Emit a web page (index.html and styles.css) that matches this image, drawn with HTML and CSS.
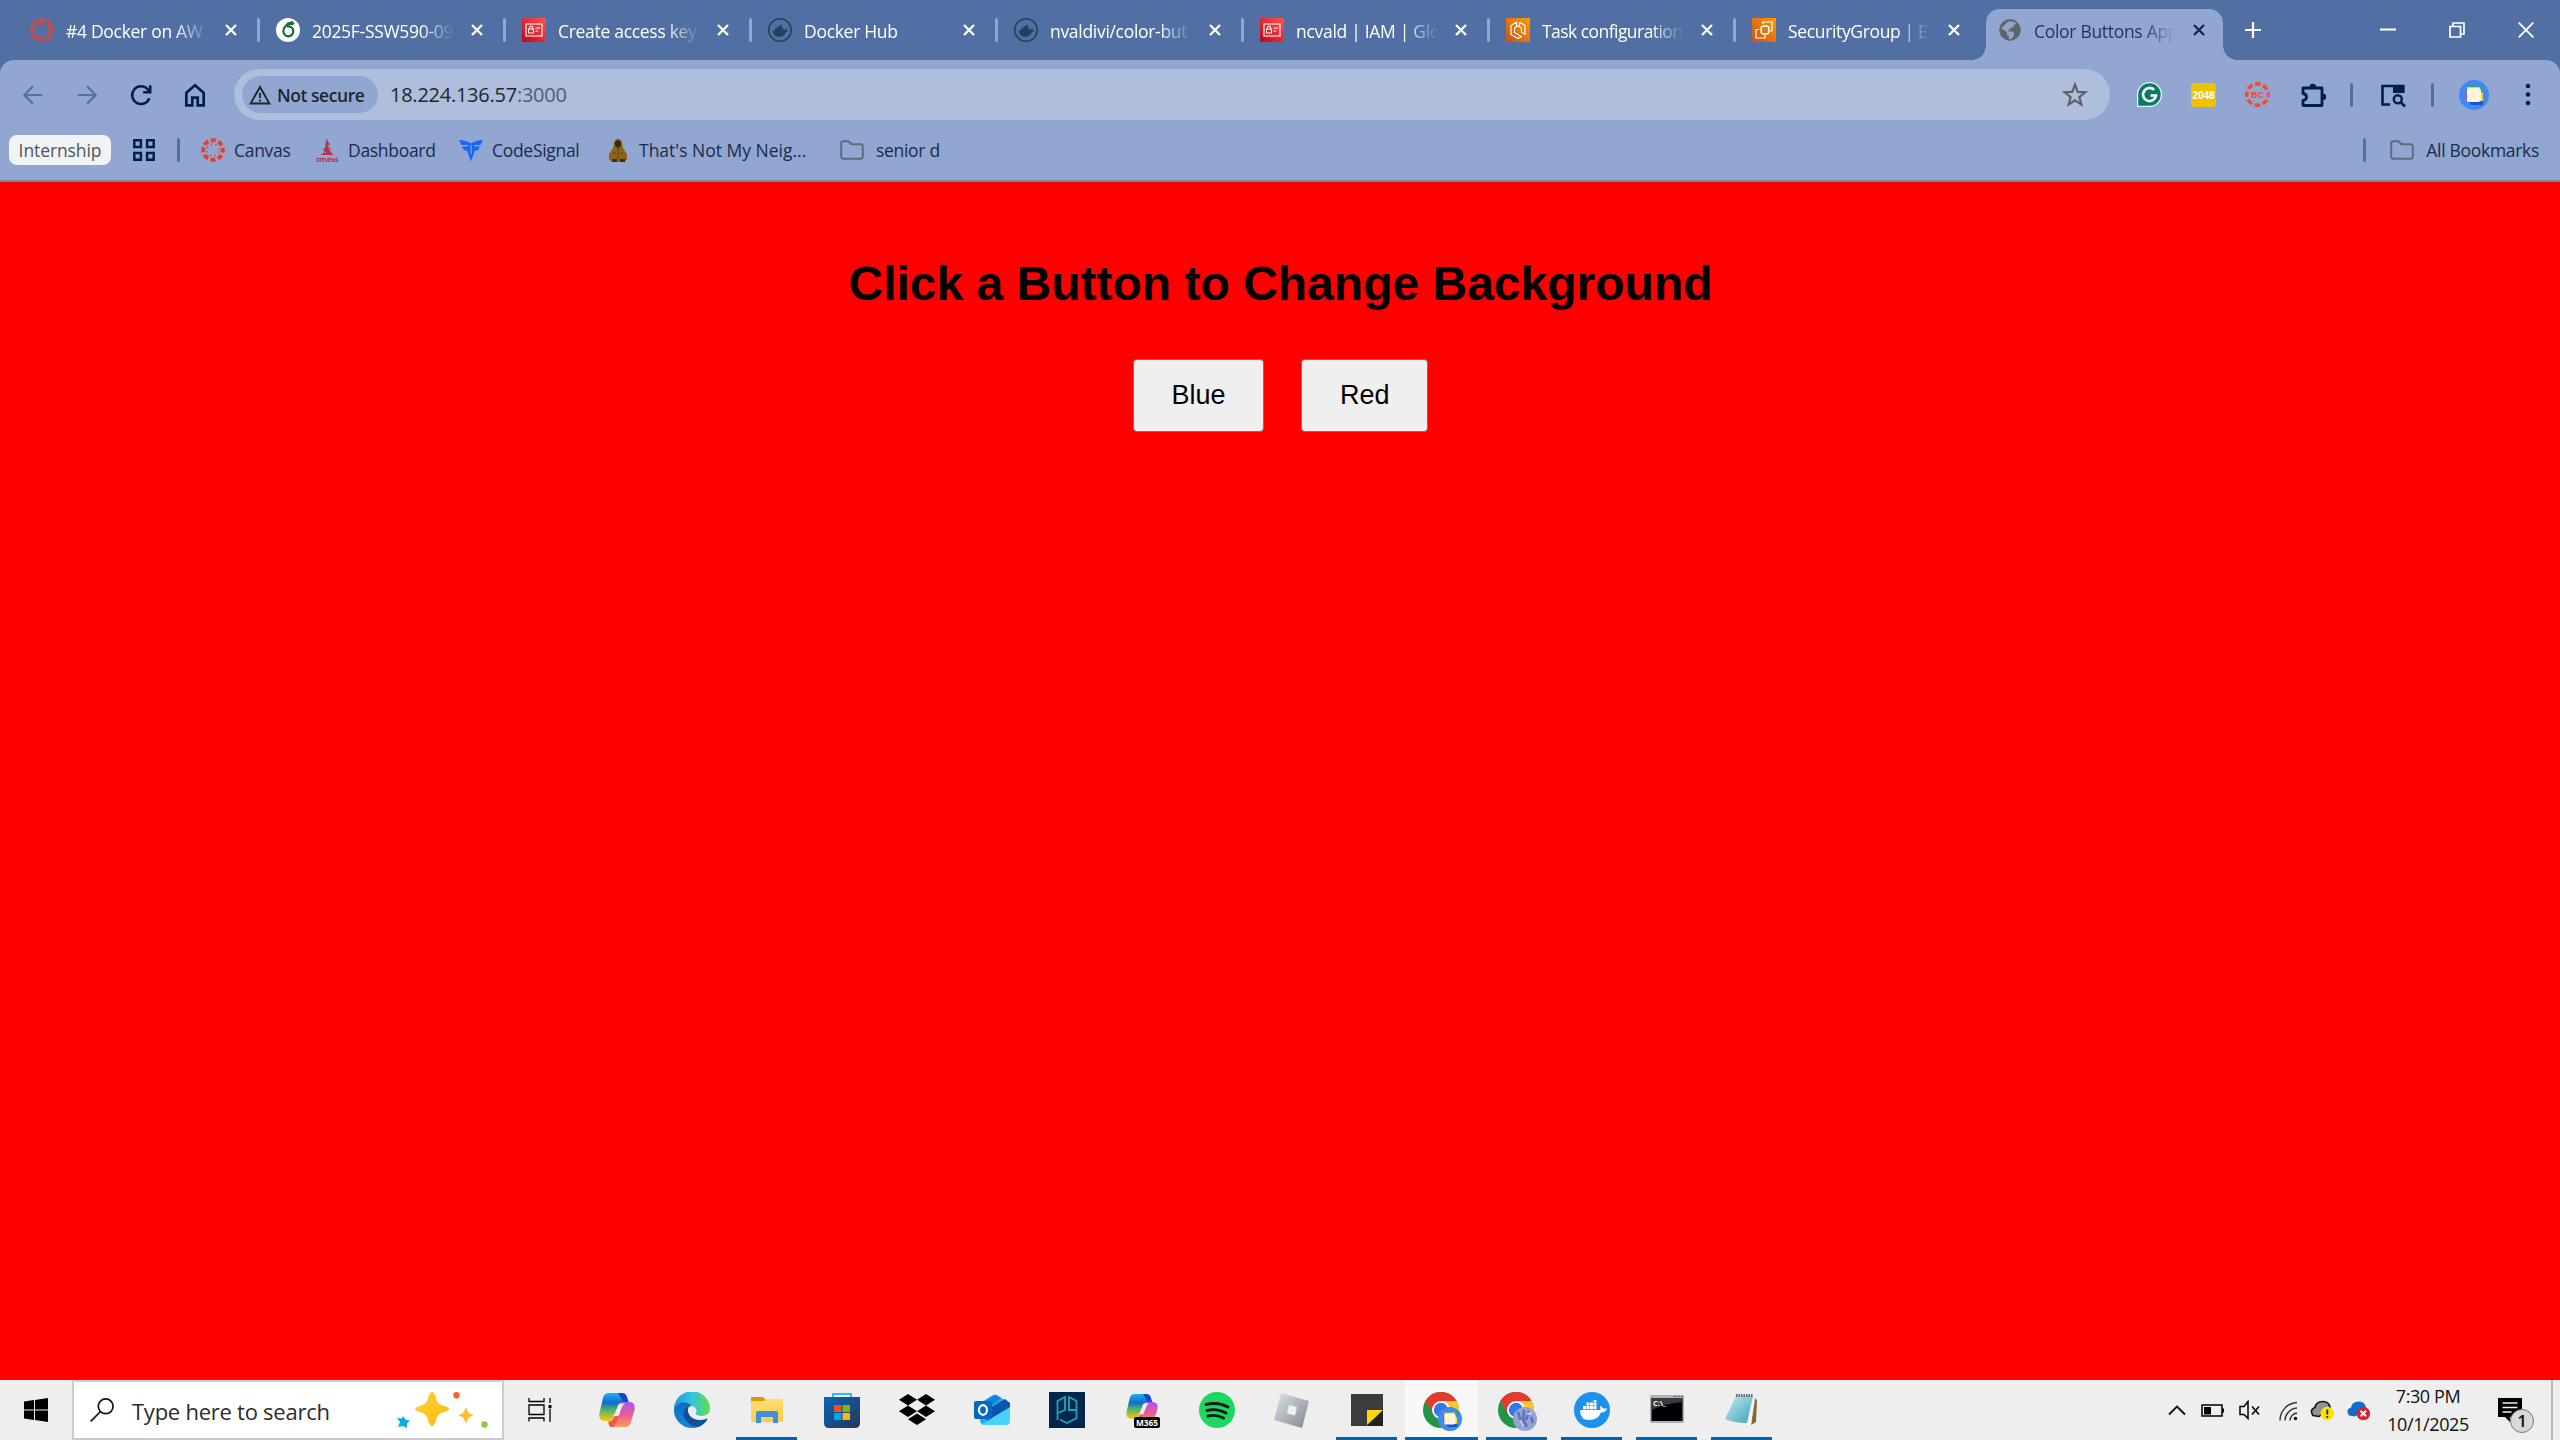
FILE: index.html
```html
<!DOCTYPE html>
<html lang="en">
<head>
<meta charset="utf-8">
<title>Color Buttons App</title>
<link rel="stylesheet" href="styles.css">
</head>
<body>
<svg class="defs" aria-hidden="true">
  <defs>
    <linearGradient id="gRed" x1="0" y1="1" x2="1" y2="0"><stop offset="0" stop-color="#bd0816"/><stop offset="1" stop-color="#ff5252"/></linearGradient>
    <linearGradient id="gOrange" x1="0" y1="1" x2="1" y2="0"><stop offset="0" stop-color="#c8511b"/><stop offset="1" stop-color="#f90"/></linearGradient>
    <linearGradient id="gCopA" x1="0" y1="0" x2="0" y2="1"><stop offset="0" stop-color="#18b4f0"/><stop offset=".35" stop-color="#1668d0"/><stop offset=".6" stop-color="#4cb56b"/><stop offset="1" stop-color="#ffc800"/></linearGradient>
    <linearGradient id="gCopB" x1="0" y1="0" x2="0" y2="1"><stop offset="0" stop-color="#a55af0"/><stop offset=".5" stop-color="#ee5a92"/><stop offset="1" stop-color="#fb9d5c"/></linearGradient>
    <linearGradient id="gEdge" x1="0" y1="0" x2="1" y2="0"><stop offset="0" stop-color="#1b9de2"/><stop offset=".5" stop-color="#35c1e0"/><stop offset="1" stop-color="#62e04a"/></linearGradient>
    <linearGradient id="gEdge2" x1="0" y1="0" x2="0" y2="1"><stop offset="0" stop-color="#0f5fae"/><stop offset="1" stop-color="#1189e0"/></linearGradient>
    <linearGradient id="gStore" x1="0" y1="0" x2="1" y2="1"><stop offset="0" stop-color="#0a67b8"/><stop offset="1" stop-color="#283557"/></linearGradient>
    <linearGradient id="gStar" x1="0" y1="0" x2="1" y2="1"><stop offset="0" stop-color="#ffd23c"/><stop offset="1" stop-color="#f9b80a"/></linearGradient>
    <linearGradient id="gRob" x1="0" y1="0" x2="1" y2="1"><stop offset="0" stop-color="#dfe3e8"/><stop offset="1" stop-color="#7f8791"/></linearGradient>
    <linearGradient id="gNote" x1="0" y1="0" x2="1" y2="1"><stop offset="0" stop-color="#c8edf2"/><stop offset="1" stop-color="#3ba2b7"/></linearGradient>
    <linearGradient id="gFold" x1="0" y1="0" x2="0" y2="1"><stop offset="0" stop-color="#ffdc70"/><stop offset="1" stop-color="#ffcc4a"/></linearGradient>
    <symbol id="canvas" viewBox="0 0 24 24">
      <circle cx="12" cy="12" r="9.8" fill="none" stroke="#e63f30" stroke-width="4" stroke-dasharray="5.2 2.497" stroke-dashoffset="2.6"/>
      <circle cx="12" cy="12" r="6" fill="none" stroke="#e63f30" stroke-width="1.5" stroke-dasharray="1.5 3.212" stroke-dashoffset="-1.6"/>
    </symbol>
    <symbol id="x" viewBox="0 0 12 12"><path d="M1 1l10 10M11 1L1 11" fill="none" stroke="currentColor" stroke-width="2.3"/></symbol>
    <symbol id="iam" viewBox="0 0 24 24"><path fill="url(#gRed)" d="M0 0h24v24H0z"/><path fill="none" stroke="#fff" stroke-width="1.1" d="M4 6h16v12H4zM6.500 11h5v4h-5zM7.500 11V9.500a1.500 1.500 0 0 1 3 0V11M13.500 10h4.500M13.500 13h2.700"/></symbol>
    <symbol id="whale" viewBox="0 0 24 24"><path d="M2 12h3V9h3V7h3V5h3v4h2v3q2 0 2-3 2 1 2 2l2 .5q-1 2-3 2Q17 20 10.500 20 3 20 2 12z"/></symbol>
    <symbol id="dockhub" viewBox="0 0 24 24"><circle cx="12" cy="12" r="11.200" fill="none" stroke="#1d4259" stroke-width="1.500"/><svg x="3" y="3" width="19" height="19" fill="#1d4259"><use href="#whale"/></svg></symbol>
    <symbol id="folder" viewBox="0 0 24 20"><path d="M1.200 16.500v-13Q1.200 1.200 3.500 1.200h5l3 3h9q2.300 0 2.300 2.300v10q0 2.300-2.300 2.300h-17q-2.300 0-2.300-2.300z" fill="none" stroke="#606b82" stroke-width="2"/></symbol>
    <symbol id="chrome" viewBox="0 0 36 36">
      <circle cx="18" cy="18" r="18" fill="#219447"/><path fill="#e33b2e" d="M2.400 9A18 18 0 0 1 33.600 9H18v9l-7.800 4.500z"/><path fill="#fdc42c" d="M33.600 9A18 18 0 0 1 18 36l7.800-13.500L18 9z"/><circle cx="18" cy="18" r="9" fill="#fff"/><circle cx="18" cy="18" r="7.200" fill="#3377e8"/>
    </symbol>
    <symbol id="copilot" viewBox="0 0 36 34">
      <path fill="url(#gCopA)" d="M10 0h12q4 0 5 4l2 6h-5q-4 0-5.500 4l-4 10q-1 4-5 4H6Q-1 28 .5 20L4 5q1-5 6-5z"/><path fill="#1746c4" d="M19 0h4q4 0 5 4l2 6h-5z"/>
      <path fill="url(#gCopB)" d="M24 9h6q7 0 5.500 8L32 29q-1 5-6 5H13q-3 0-3.500-5 4 0 5.500-5l4-10q1-5 5-5z"/>
      <path fill="#f4573a" d="M9.500 28q4 1 6-4h4l-3 7q-1 3-4 3-3 0-3-6z"/>
      <path fill="#eee" d="M21 10.500h5q-2 1-3 3.500l-3.500 9h-6q2-1 3-3.500l2-5.500q1-3.500 2.500-3.500z"/>
    </symbol>
    <symbol id="avatar" viewBox="0 0 30 30"><circle cx="15" cy="15" r="15" fill="#4187f5"/><path fill="#f1d91f" d="M8 7h14v5l2 1v9H8z"/><path fill="#27b44a" d="M9 7l4-2 5 2zM21 7h3v4h-3z"/><path fill="#e54831" d="M6 12l3 2v6l-2-2z"/><path fill="#1559cf" d="M10 21h14v4H12z"/><rect x="8" y="8" width="14" height="14" rx="3" fill="#fff4dc"/></symbol>
  </defs>
</svg>

<header class="tabs">
  <div class="tab"><svg class="fav"><use href="#canvas"/></svg><span class="title">#4 Docker on AW</span><svg class="close"><use href="#x"/></svg></div>
  <div class="tab"><svg class="fav" viewBox="0 0 24 24"><circle cx="12" cy="12" r="12" fill="#fff"/><path d="M17 4Q9 6 7.500 12a5 5 0 1 0 3.500-3.500M11 5q4 2 7 0" fill="none" stroke="#156b3a" stroke-width="2.200"/></svg><span class="title">2025F-SSW590-09</span><svg class="close"><use href="#x"/></svg></div>
  <div class="tab"><svg class="fav"><use href="#iam"/></svg><span class="title">Create access key</span><svg class="close"><use href="#x"/></svg></div>
  <div class="tab"><svg class="fav"><use href="#dockhub"/></svg><span class="title">Docker Hub</span><svg class="close"><use href="#x"/></svg></div>
  <div class="tab"><svg class="fav"><use href="#dockhub"/></svg><span class="title">nvaldivi/color-but</span><svg class="close"><use href="#x"/></svg></div>
  <div class="tab"><svg class="fav"><use href="#iam"/></svg><span class="title">ncvald | IAM | Glo</span><svg class="close"><use href="#x"/></svg></div>
  <div class="tab"><svg class="fav" viewBox="0 0 24 24"><path fill="url(#gOrange)" d="M0 0h24v24H0z"/><path d="M10.500 4L5 7.500v9l7 4 4-2.300M13.500 4L19 7.500v8.700l-3.500-2V10L12 8l-3.500 2v4.500L12 16.500l3 2M10.500 4v4M13.500 4v4" fill="none" stroke="#fff" stroke-width="1.200"/></svg><span class="title tight">Task configuration</span><svg class="close"><use href="#x"/></svg></div>
  <div class="tab last"><svg class="fav" viewBox="0 0 24 24"><path fill="url(#gOrange)" d="M0 0h24v24H0z"/><path d="M9.500 8.500h7v7h-7zM11 8.500V7M13 8.500V7M15 8.500V7M11 17v-1.500M13 17v-1.500M15 17v-1.500M8 10h1.500M8 12h1.500M8 14h1.500M16.500 10H18M16.500 12H18M16.500 14H18M11 6V4h9v9h-2M7 11.500H4V20h9v-3" fill="none" stroke="#fff" stroke-width="1.200"/></svg><span class="title">SecurityGroup | EC</span><svg class="close"><use href="#x"/></svg></div>
  <div class="tab active"><svg class="fav globe" viewBox="0 0 24 24"><circle cx="12" cy="12" r="10.700" fill="#5f6368"/><path fill="#91a7d1" d="M10 3.500q6-1 8.500 2.500-2 0-3 1.500v2h-3v2H10l1 2h4l1 2v2l-2 3-3 1v-3l-2-1.500V14l-5-3q-.8-1 0-1.500z" opacity=".95"/></svg><span class="title">Color Buttons App</span><svg class="close"><use href="#x"/></svg></div>
  <svg class="plus" viewBox="0 0 16 16"><path d="M8 0v16M0 8h16" stroke="#fff" stroke-width="2.200"/></svg>
  <div class="winbtns">
    <svg viewBox="0 0 16 16"><path d="M0 7.500h16" stroke="#fff" stroke-width="2"/></svg>
    <svg viewBox="0 0 16 16"><path d="M1 4.500h10.500V15H1zM4 4V1h11v11h-3" fill="none" stroke="#fff" stroke-width="1.700"/></svg>
    <svg viewBox="0 0 16 16"><path d="M.7.700l14.600 14.600M15.300.7L.7 15.300" stroke="#fff" stroke-width="1.800"/></svg>
  </div>
</header>

<section class="chrome">
  <div class="toolbar">
    <nav class="nav">
      <svg class="off" viewBox="0 0 24 24"><path d="M20.500 12H4M12 4l-8 8 8 8"/></svg>
      <svg class="off" viewBox="0 0 24 24"><path d="M3.500 12H20M12 4l8 8-8 8"/></svg>
      <svg viewBox="0 0 24 24"><path d="M19.700 15A8.200 8.200 0 1 1 18 6.500l2 2M20.500 3v6.500H14" stroke-width="2.300"/></svg>
      <svg viewBox="0 0 24 24"><path d="M4 21.500V10l8-7 8 7v11.500h-5.500V14.500h-5v7z" stroke-width="2.500"/></svg>
    </nav>
    <div class="omnibox">
      <div class="chip"><svg viewBox="0 0 22 20"><path d="M11 2L1.600 18.500h18.800z" fill="none" stroke="#23262b" stroke-width="1.900"/><path d="M11 8v5M11 14.500v2" stroke="#23262b" stroke-width="1.900"/></svg><span>Not secure</span></div>
      <span class="url">18.224.136.57<i>:3000</i></span>
      <svg class="star" viewBox="0 0 24 24"><path d="M12 2.500l2.500 6.600 7 .4-5.500 4.400 1.900 6.900L12 16.900l-5.900 3.900L8 13.900 2.500 9.500l7-.4z" fill="none" stroke="#5d6067" stroke-width="2"/></svg>
    </div>
    <div class="ext">
      <svg viewBox="0 0 24 24"><path d="M0 24V12A12 12 0 1 1 12 24z" fill="#e9f5f0"/><path d="M1.200 22.800V12A10.800 10.800 0 1 1 12 22.800z" fill="#077b66"/><path d="M16.500 7.500A6.300 6.300 0 1 0 18.300 13H13" fill="none" stroke="#fff" stroke-width="2.500"/></svg>
      <div class="g2048">2048</div>
      <div class="bc"><svg viewBox="0 0 24 24"><circle cx="12" cy="12" r="10.300" fill="none" stroke="#f24a2d" stroke-width="3.400" stroke-dasharray="5.400 2.690" stroke-dashoffset="2.700"/><path d="M22.200 9.500q.8 2.500 0 5" fill="none" stroke="#ff4aa0" stroke-width="3.400"/></svg><b>BC</b></div>
      <svg viewBox="0 0 26 26"><path d="M3 6h19v17.500H3v-5q3.500-.5 3.500-3.500T3 11.500z" fill="none" stroke="#001f50" stroke-width="2.800" stroke-linejoin="round"/><path fill="#001f50" d="M9.500 5a3.300 3.300 0 0 1 6.600 0zM23 11.500a3.300 3.300 0 0 1 0 6.600z"/></svg>
      <i class="bar"></i>
      <svg viewBox="0 0 26 26"><path d="M10 22.500H2.500V4H23v7" fill="none" stroke="#001f50" stroke-width="2.600"/><path fill="#001f50" d="M13 3h11.500v8H13z"/><circle cx="17.800" cy="17.300" r="4" fill="none" stroke="#001f50" stroke-width="2.500"/><path d="M20.500 20l4.500 4.500" stroke="#001f50" stroke-width="2.700"/></svg>
      <i class="bar"></i>
      <svg class="ava"><use href="#avatar"/></svg>
      <svg class="dots" viewBox="0 0 6 24"><g fill="#001f50"><circle cx="3" cy="3.500" r="2.300"/><circle cx="3" cy="12" r="2.300"/><circle cx="3" cy="20.500" r="2.300"/></g></svg>
    </div>
  </div>
  <div class="bookmarks">
    <span class="group">Internship</span>
    <svg class="apps" viewBox="0 0 22 22"><path d="M1.300 1.300h6.600v6.600H1.300zM14.100 1.300h6.600v6.600h-6.600zM1.300 14.100h6.600v6.600H1.300zM14.100 14.100h6.600v6.600h-6.600z" fill="none" stroke="#001f50" stroke-width="2.500"/></svg>
    <i class="bar"></i>
    <div class="bm" style="width:114px"><svg><use href="#canvas"/></svg><span>Canvas</span></div>
    <div class="bm" style="width:144px"><svg viewBox="0 0 24 24"><path fill="#ad3650" d="M12 0l1 4 2 2-1 2 2 3v3l2 3H6l3-3-1-2 3-4-1-2 1-2z"/><path d="M7 12l4 3M13 7l3 7" stroke="#91a7d1"/><text x="12" y="24" text-anchor="middle" textLength="22" lengthAdjust="spacingAndGlyphs" font-size="5.500" font-weight="700" fill="#b52a42">STEVENS</text></svg><span>Dashboard</span></div>
    <div class="bm" style="width:147px"><svg viewBox="0 0 24 24"><path fill="#1869f2" d="M0 2q7 0 12 3.500Q17 2 24 2l-2.500 5H16v1.500h5l-2 4h-3l-4 11-4-11H5l-2-4h5V7H2.500z"/><path d="M12 7v9M4 7.500h5M15 7.500h5" stroke="#91a7d1" stroke-width="1.200"/></svg><span>CodeSignal</span></div>
    <div class="bm neig" style="width:234px"><svg viewBox="0 0 24 24"><path fill="#8d6516" d="M8 4q4-7 8 0l1 6 4 6v6l-4 2H7l-4-2v-6l4-6z"/><path fill="#3c2c14" d="M9 4q3-4 6 0v4l-3 2-3-2zM6 21h5v3H6zM14 21h5v3h-5z"/><path d="M12 10v11M7 14l3 2M17 14l-3 2" stroke="#5f420d"/></svg><span>That's Not My Neig...</span></div>
    <div class="bm folderbm"><svg class="fold"><use href="#folder"/></svg><span>senior d</span></div>
    <div class="allbm"><i class="bar"></i><svg class="fold"><use href="#folder"/></svg><span>All Bookmarks</span></div>
  </div>
</section>

<main class="page">
  <h1>Click a Button to Change Background</h1>
  <div class="choices"><button>Blue</button><button>Red</button></div>
</main>

<footer class="taskbar">
  <div class="start"><svg viewBox="0 0 24 24"><path d="M0 3.500L10 2v9.500H0zM11 1.900L24 0v11.500H11zM0 12.500h10V22L0 20.500zM11 12.500h13V24l-13-1.900z"/></svg></div>
  <div class="search">
    <svg class="glass" viewBox="0 0 24 24"><circle cx="15.700" cy="8.300" r="7.400" fill="none" stroke="#111" stroke-width="1.700"/><path d="M10.500 13.500L.7 23.300" stroke="#111" stroke-width="1.700"/></svg>
    <span>Type here to search</span>
    <svg class="sparks" viewBox="0 0 92 36"><path fill="url(#gStar)" d="M35 0q3 0 4.500 8 1 3 4.500 5 8 2 8 4t-8 4q-3.500 2-4.500 5-1.500 8-4.500 8t-4.500-8q-1-3-4.500-5-8-2-8-4t8-4q3.500-2 4.500-5 1.500-8 4.500-8z"/><path fill="#f9bf2d" d="M69 15q2 5 3 6t5 2q-4 1.500-5 2.500t-3 6q-2-5-3-6t-5-2.500q4-1 5-2t3-6z"/><path fill="#0baae8" d="M6 24l3 4 4 .5-3 3L10 36l-4-2-5 1 2-5-3-4 5 .5z"/><circle cx="59.500" cy="3.200" r="3.200" fill="#f2622a"/><circle cx="87.500" cy="32.500" r="3.200" fill="#8ac83c"/></svg>
  </div>
  <div class="view"><svg viewBox="0 0 24 24"><path d="M1 0v3.500h15V0M1 23.500V20h15v3.500M1 7h15v9.500H1zM22 0v5M22 11v13" fill="none" stroke="#000" stroke-width="1.300"/><path d="M20.500 7h3v3.200h-3z"/></svg></div>
  <div class="apps-row">
    <div class="app"><svg viewBox="0 0 36 36"><svg y="1" width="36" height="34"><use href="#copilot"/></svg></svg></div>
    <div class="app"><svg viewBox="0 0 36 36"><circle cx="18" cy="18" r="18" fill="url(#gEdge2)"/><path fill="#eee" d="M18 13.500Q13 15 14 20 16 28 24 28q5 0 9-1.500l4 1V14L26 14z"/><path fill="url(#gEdge)" d="M0 18A18 18 0 0 1 36 16.500Q36 24 27 24q-6.500-.5-5-3 2-4-4-7.500Q10 8 4 12 .5 14.500 0 18z"/><path fill="#134f96" d="M14 14.500Q7 19 11 27q4 7 13 8 6-2 9.500-8-5 2-9.500 1-8.500-1.500-10-8-.5-3 0-5.500z"/></svg></div>
    <div class="app run"><svg viewBox="0 0 36 36"><path fill="#d99b05" d="M2 5h12l3 3v3H2z"/><path fill="url(#gFold)" d="M2 9h13l3-2h16v22q0 1-1 1H3q-1 0-1-1z"/><path fill="#3b90d8" d="M7 31V21q0-2 2-2h18q2 0 2 2v10h-5v-6H12v6z"/></svg></div>
    <div class="app"><svg viewBox="0 0 36 36"><path d="M9 7V2h18v5" fill="none" stroke="#2dbdf1" stroke-width="2"/><path fill="url(#gStore)" d="M0 5h36v26q0 5-5 5H5q-5 0-5-5z"/><path fill="#f25022" d="M10 13h7.500v7H10z"/><path fill="#7fba00" d="M18.500 13H26v7h-7.500z"/><path fill="#00a4ef" d="M10 21h7.500v7H10z"/><path fill="#ffb900" d="M18.500 21H26v7h-7.500z"/></svg></div>
    <div class="app"><svg viewBox="0 0 36 36"><path d="M9 2l9 5.700-9 5.800-9-5.800zM27 2l9 5.700-9 5.800-9-5.800zM9 13.500l9 5.800-9 5.700-9-5.700zM27 13.500l9 5.800-9 5.700-9-5.700zM18 21.500l9 5.700-9 5.800-9-5.800z"/></svg></div>
    <div class="app"><svg viewBox="0 0 36 36"><path fill="#28a9e9" d="M6 11L19 3q2-1 4 0l12 8v17q0 5-5 5H11q-5 0-5-5z"/><path fill="#0757b1" d="M13 18l18-11 5 4v7L18 29h-5z"/><path fill="#1483dd" d="M8 11l13-8 6 3-15 12z"/><path fill="#47d3f7" d="M8 32l28-17v14q0 4-4 4H11z"/><rect y="9" width="18" height="18" rx="2" fill="#0867c5"/><ellipse cx="9" cy="18" rx="4" ry="4.800" fill="none" stroke="#fff" stroke-width="2.200"/></svg></div>
    <div class="app"><svg viewBox="0 0 36 36"><path fill="#03254c" d="M0 0h36v36H0z"/><path d="M8.500 28V9L16 5v13l-7 3M20 12V5l7.500 4v17L18 31l-7-3.500M20 12v6h7" fill="none" stroke="#14a9b8" stroke-width="1.800"/></svg></div>
    <div class="app"><svg viewBox="0 0 36 36"><svg y="2" width="36" height="30"><use href="#copilot"/></svg><rect x="10" y="25" width="26" height="11" rx="2"/><text x="23" y="34" text-anchor="middle" font-size="9.500" font-weight="700" textLength="22" lengthAdjust="spacingAndGlyphs" fill="#fff">M365</text></svg></div>
    <div class="app"><svg viewBox="0 0 36 36"><circle cx="18" cy="18" r="18" fill="#1fd660"/><path d="M7 12.500q12-3 22 2.500M8 18.500q10-2.500 19 2.500M9 24q8-2 15.500 2" fill="none" stroke="#0b1a10" stroke-width="2.900" stroke-linecap="round"/></svg></div>
    <div class="app"><svg viewBox="0 0 36 36"><path fill="url(#gRob)" d="M7 1l28 8-7 27L0 28z"/><path fill="#eee" d="M15 13l8 2-2 8.500-8-2z"/></svg></div>
    <div class="app run"><svg viewBox="0 0 36 36"><path fill="#3c3c3c" d="M2 2h32v32H2z"/><path fill="#222" d="M34 18v16H18z"/><path fill="#ffd60a" d="M18 18h16L18 33z"/></svg></div>
    <div class="app run on"><svg class="big" viewBox="0 0 39 39"><svg width="36" height="36"><use href="#chrome"/></svg><svg x="15" y="15" width="24" height="24"><use href="#avatar"/></svg></svg></div>
    <div class="app run"><svg class="big" viewBox="0 0 39 39"><svg width="36" height="36"><use href="#chrome"/></svg><circle cx="27" cy="27" r="12" fill="#93a3d4"/><path d="M20 20l4 13M26 18l-1 9 4 8M31 19l-3 9M33 25l2 6" fill="none" stroke="#6270b8" stroke-width="2.600"/><path d="M22 28l3 6M29 22l5-1" stroke="#c4cdea" stroke-width="2"/></svg></div>
    <div class="app run"><svg viewBox="0 0 36 36"><circle cx="18" cy="18" r="18" fill="#1d91ee"/><path fill="#fff" d="M6 18h20q1-1 0-4 2 0 3 2.500h4q-1 4-6 4Q24 28 15 28 6 28 6 18zM9 14h3v3.200H9zM12.500 14h3v3.200h-3zM16 14h3v3.200h-3zM19.500 14h3v3.200h-3zM12.500 10.500h3v3h-3zM16 10.500h3v3h-3zM19.500 10.500h3v3h-3zM19.500 8h3v2h-3z"/></svg></div>
    <div class="app run"><svg viewBox="0 0 36 36"><rect x="1" y="3" width="34" height="28" rx="1.500" fill="#a9b2bd"/><path d="M2.500 6h31v23h-31z"/><path fill="#3b3b3b" d="M2.500 6h31v4Q14 12 2.500 18z"/><path d="M25 4.500h2M28.500 4.500h2M32 4.500h2" stroke="#4a668c"/><text x="4" y="14" font-size="7.500" font-weight="700" fill="#fff">C:\_</text></svg></div>
    <div class="app run"><svg viewBox="0 0 36 36"><path fill="#85663a" d="M30 6l3 2-1 22-5 3z"/><path fill="#f3f5f5" d="M28 4l3 3-4 26-6-1z"/><path fill="url(#gNote)" d="M12 4h17l-6 27Q10 31 1 27z"/><path d="M12 3.500h17" stroke="#596b70" stroke-width="3" stroke-dasharray="1.500 1"/></svg></div>
  </div>
  <div class="tray">
    <svg style="width:18px" viewBox="0 0 18 20"><path d="M1 14l8-8 8 8" fill="none" stroke="#111" stroke-width="1.800"/></svg>
    <svg style="width:23px" viewBox="0 0 23 20"><path d="M1 4.500h20v11H1zM22.500 8v4" fill="none" stroke="#000" stroke-width="1.500"/><path d="M3 6.500h7v7.500H3z"/></svg>
    <svg style="width:21px" viewBox="0 0 21 20"><path d="M1 6h4l4-5v17l-4-4H1zM13 6l7 8M20 6l-7 8" fill="none" stroke="#000" stroke-width="1.500"/></svg>
    <svg class="wifi" style="width:19px" viewBox="0 0 19 20"><path d="M1 20A18 18 0 0 1 18 2M6 20A13 13 0 0 1 18 7.500M11 20a8 8 0 0 1 7-7.500" fill="none" stroke="#333" stroke-width="1.400"/><circle cx="16.500" cy="18" r="1.700"/></svg>
    <svg class="cloud" style="width:24px" viewBox="0 0 24 20"><path d="M3 15Q-1 9 5 7q1-6 8-6 6 0 7 6L9 16z" fill="#929292" stroke="#111" stroke-width="1.600"/><circle cx="17.300" cy="13" r="6.800" fill="#fbe300"/><path d="M17.300 9v5M17.300 15.500v2" stroke="#222" stroke-width="1.800"/></svg>
    <svg class="cloud" style="width:24px" viewBox="0 0 24 20"><path d="M3 15Q-1 9 5 7q1-6 8-6 6 0 7 6L9 16z" fill="#0b6fca"/><circle cx="17.300" cy="13" r="6.800" fill="#d3242e"/><path d="M14.500 10.200l5.600 5.600M20.100 10.200l-5.600 5.600" stroke="#fff" stroke-width="2"/></svg>
  </div>
  <div class="clock"><span>7:30 PM</span><span>10/1/2025</span></div>
  <div class="note"><svg viewBox="0 0 24 24"><path d="M0 0h24v19H12v5l-5-5H0z"/><path d="M4.500 5h15M4.500 9.500h15M4.500 14h9" stroke="#eee" stroke-width="1.300"/></svg><b>1</b></div>
</footer>
</body>
</html>
```
FILE: styles.css
```css
* { box-sizing: border-box; }
body {
  margin: 0; width: 2560px; height: 1440px; overflow: hidden;
  display: flex; flex-direction: column;
  font: 17.5px/24px "Open Sans", "Noto Sans", sans-serif; color: #1d2b4a;
  background: #526fa4;
}
svg { display: block; flex: none; }
i { font-style: normal; }
.defs { position: absolute; width: 0; height: 0; }

/* tab strip */
.tabs { height: 60px; display: flex; align-items: center; padding-left: 14px; color: #fff; }
.tab {
  width: 246px; height: 60px; padding-left: 16px; flex: none;
  display: flex; align-items: center; position: relative;
}
.tab:not(.last):not(.active)::after {
  content: ""; width: 3px; height: 24px; margin-left: 20px; background: #91a7d1; border-radius: 2px;
}
.fav { width: 24px; height: 24px; margin-right: 12px; }
.title {
  width: 143px; margin-right: 18px; padding-top: 2px; overflow: hidden; white-space: nowrap; letter-spacing: -.3px;
  -webkit-mask-image: linear-gradient(90deg, #000 108px, transparent 142px);
  mask-image: linear-gradient(90deg, #000 108px, transparent 142px);
}
.title.tight { letter-spacing: -.55px; }
.close { width: 12px; height: 12px; }
.tab.last { width: 250px; }
.last .title { width: 142px; letter-spacing: -.35px; }
.tabs .active {
  width: 237px; height: 51px; align-self: flex-end; padding: 0 0 9px 12px;
  background: #91a7d1; border-radius: 14px 14px 0 0; color: #14264a;
}
.active::before {
  content: ""; position: absolute; left: -14px; right: -14px; bottom: 0; height: 14px;
  background:
    radial-gradient(circle at 0 0, transparent 13.5px, #91a7d1 14px) left / 14px 14px no-repeat,
    radial-gradient(circle at 100% 0, transparent 13.5px, #91a7d1 14px) right / 14px 14px no-repeat;
}
.active .title { width: 141px; color: #23365c; }
.plus { width: 16px; height: 16px; margin-left: 22px; }
.winbtns { margin-left: auto; padding-right: 26px; display: flex; gap: 53px; }
.winbtns svg { width: 16px; height: 16px; }

/* toolbar */
.chrome { height: 122px; background: #91a7d1; border-radius: 14px 14px 0 0; border-bottom: 2px solid #7287ae; }
.toolbar { height: 69px; padding-top: 9px; display: flex; }
.nav { width: 234px; height: 51px; padding-left: 20px; display: flex; align-items: center; gap: 28px; }
.nav svg { width: 26px; height: 26px; fill: none; stroke: #001f50; stroke-width: 2; }
.nav svg.off { stroke: #56719f; }
.omnibox {
  width: 1876px; height: 51px; border-radius: 26px; background: #aebedb; padding-left: 8px;
  display: flex; align-items: center;
}
.chip {
  width: 136px; height: 37px; border-radius: 19px; background: #91a7d1; color: #23262b;
  display: flex; align-items: center; padding-left: 7px; gap: 6px; font-weight: 600; letter-spacing: -.45px; white-space: nowrap;
}
.chip svg { width: 22px; height: 20px; }
.url { margin-left: 12px; font-size: 20px; letter-spacing: -.25px; color: #23262b; }
.url i { color: #535c6e; }
.star { width: 26px; height: 26px; margin-left: auto; margin-right: 22px; }
.ext { flex: 1; height: 51px; padding-left: 27px; display: flex; align-items: center; }
.ext > svg { width: 26px; height: 26px; margin-right: 28px; }
.ext > svg:first-child { width: 25px; height: 25px; margin-right: 29px; }
.g2048 {
  width: 25px; height: 24px; margin-right: 29px; border-radius: 3px; background: #edc202; color: #fff;
  font: 700 10px/25px "Liberation Sans", sans-serif; text-align: center;
}
.bc { width: 25px; height: 25px; margin-right: 30px; display: grid; place-items: center; }
.bc > * { grid-area: 1 / 1; }
.bc svg { width: 25px; height: 25px; }
.bc b { font: 700 9px/12px "Liberation Sans", sans-serif; color: #f24a2d; }
.bar { width: 3px; height: 24px; border-radius: 2px; background: #526fa4; flex: none; }
.ext .bar { margin-left: -4px; margin-right: 27px; }
.ext .bar + svg { margin-right: 29px; }
.ext .ava { width: 30px; height: 30px; margin-right: 36px !important; margin-left: -2px; }
.ext .dots { width: 6px; height: 25px; margin: 0; }

/* bookmarks */
.bookmarks { height: 42px; padding-bottom: 1px; display: flex; align-items: center; padding: 0 21px 0 9px; letter-spacing: -.3px; white-space: nowrap; }
.group { width: 102px; height: 30px; line-height: 30px; text-align: center; border-radius: 8px; background: #f1f3f5; color: #505359; letter-spacing: -.1px; }
.apps { width: 22px; height: 22px; margin: 0 22px; }
.bookmarks > .bar { margin-right: 21px; }
.bm { display: flex; align-items: center; gap: 9px; flex: none; }
.bm.folderbm { gap: 12px; }
.neig { letter-spacing: 0; }
.bm svg { width: 24px; height: 24px; }
.bm .fold, .allbm .fold { width: 24px; height: 20px; }
.allbm { margin-left: auto; display: flex; align-items: center; }
.allbm svg { margin: 0 12px 0 24px; }

/* web page */
.page { flex: 1; background: #f00; color: #000; font-family: "Liberation Sans", Arial, sans-serif; padding: 74px 0 0 1px; text-align: center; }
h1 { margin: 0 0 48px; font-size: 48px; line-height: 55px; }
.choices { display: flex; justify-content: center; gap: 37px; }
button {
  font: 27px/31px "Liberation Sans", Arial, sans-serif; padding: 20px 37.8px; height: 73px;
  border: 1px solid #767676; border-radius: 4px; background: #efefef; color: #000;
}

/* taskbar */
.taskbar { height: 60px; flex: none; background: #eee; color: #111; display: flex; align-items: center; }
.start { width: 72px; padding-left: 24px; }
.start svg, .view svg { width: 24px; height: 24px; }
.search { width: 432px; height: 60px; background: #fff; border: 2px solid #ccc; display: flex; align-items: center; padding-left: 16px; font-size: 22px; color: #2b2b2b; letter-spacing: -.25px; }
.search span { width: 265px; padding-top: 2px; white-space: nowrap; }
.glass { width: 24px; height: 24px; margin-right: 18px; }
.sparks { width: 92px; height: 36px; }
.view { width: 75px; padding-left: 24px; }
.apps-row { display: flex; }
.app { width: 61px; margin: 0 7px; height: 60px; display: grid; place-items: center; }
.app > svg { width: 36px; height: 36px; }
.app > .big { width: 39px; height: 39px; margin-left: 2px; margin-top: 3px; }
.app.run { border-bottom: 3px solid #0063b1; padding-top: 3px; }
.app.on { width: 73px; margin: 0 1px; background: #f8f8f8; }
.tray { margin-left: auto; display: flex; align-items: center; gap: 15px; }
.tray svg { height: 21px; }
.tray .wifi { margin-left: 4px; }
.tray .cloud { margin-left: -3px; }
.clock { width: 116px; height: 60px; display: flex; flex-direction: column; align-items: center; justify-content: center; font-size: 18px; line-height: 28px; letter-spacing: -.4px; }
.note { width: 74px; height: 60px; padding-left: 12px; display: flex; align-items: center; border-right: 8px solid #eee; position: relative; }
.note::after { content: ""; position: absolute; right: -1px; top: 0; width: 2px; height: 60px; background: #bbb; }
.note svg { width: 24px; height: 24px; }
.note b {
  width: 24px; height: 24px; margin: 22px 0 0 -12px; border-radius: 50%; border: 1px solid #777;
  background: #d8d8d8; color: #111; font-size: 17px; line-height: 22px; font-weight: 600; text-align: center;
}
```
